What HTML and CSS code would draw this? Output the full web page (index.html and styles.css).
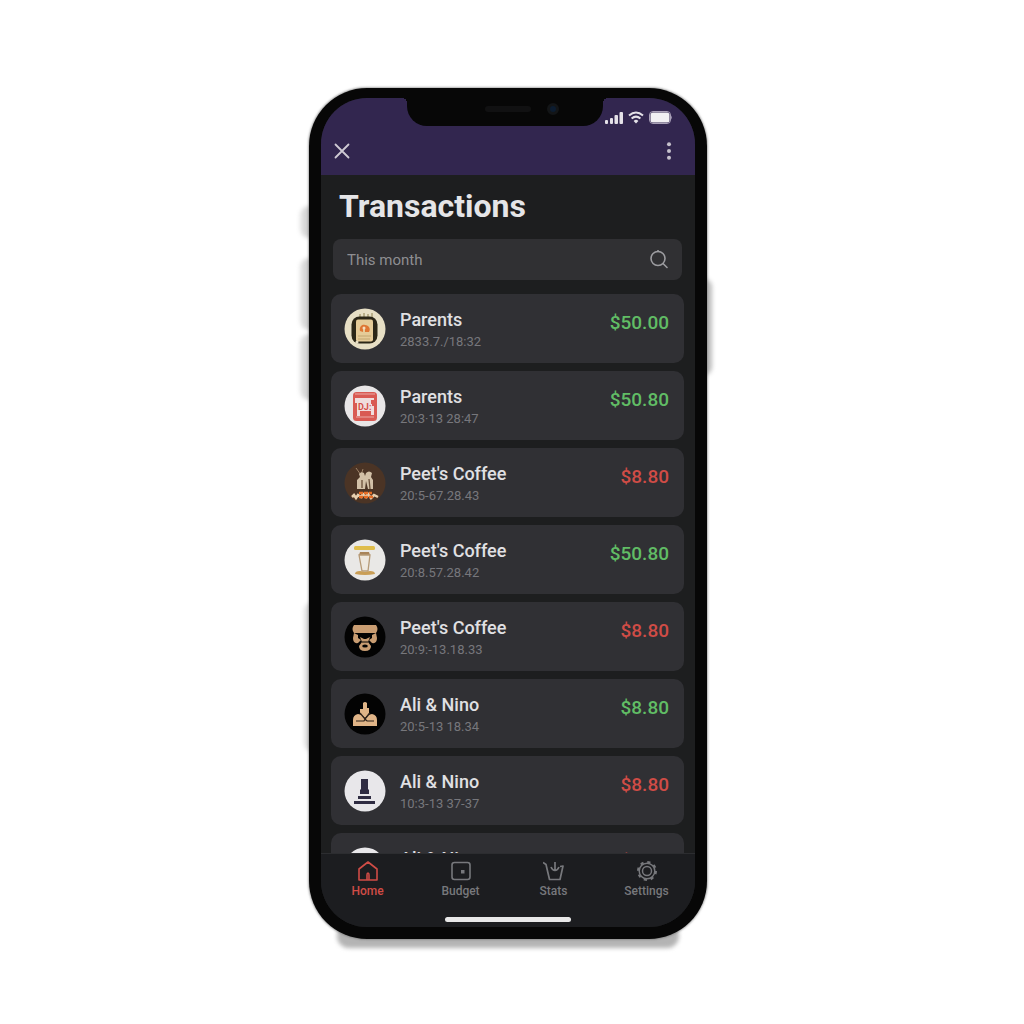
FILE: index.html
```html
<!DOCTYPE html>
<html lang="en">
<head>
<meta charset="utf-8">
<meta name="viewport" content="width=device-width, initial-scale=1">
<title>Transactions</title>
<link rel="stylesheet" href="styles.css">
</head>
<body>
<div class="phone">
  <span class="side-button mute"></span>
  <span class="side-button volume-up"></span>
  <span class="side-button volume-down"></span>
  <span class="side-button grip"></span>
  <span class="side-button power"></span>
  <span class="base-shadow"></span>
  <div class="frame">
    <div class="screen">
      <header class="header">
        <div class="status">
          <svg width="18" height="13" viewBox="0 0 18 13" fill="#e4e1e8"><rect x="0" y="9" width="3" height="4" rx="1"/><rect x="5" y="7" width="3" height="6" rx="1"/><rect x="9.500" y="4" width="3.500" height="9" rx="1"/><rect x="14.500" y="1" width="3.500" height="12" rx="1"/></svg>
          <svg width="16" height="13" viewBox="0 0 16 13" fill="none" stroke="#e4e1e8" stroke-width="2"><path d="M1 4.6Q8-1.6 15 4.6M3.6 7.5Q8 3.7 12.400 7.500"/><path d="M5.600 10Q8 7.600 10.400 10L8 12.400Z" fill="#e4e1e8" stroke="none"/></svg>
          <svg width="23" height="13" viewBox="0 0 23 13"><rect x=".5" y=".5" width="21" height="12" rx="3.500" fill="none" stroke="#a9a0b8"/><rect x="1.500" y="1.500" width="19" height="10" rx="2.500" fill="#f1f0f3"/><path d="M22 4.500Q23.500 6.500 22 8.500Z" fill="#a9a0b8"/></svg>
        </div>
        <div class="toolbar">
          <button class="icon-button" type="button" aria-label="Close"><svg width="16" height="16" viewBox="0 0 16 16" stroke="#cfcad4" stroke-width="1.800" stroke-linecap="round"><path d="M1.500 1.500l13 13M14.500 1.500l-13 13"/></svg></button>
          <button class="icon-button" type="button" aria-label="More options"><svg width="6" height="18" viewBox="0 0 6 18" fill="#c6c1cc"><circle cx="3" cy="2.300" r="2"/><circle cx="3" cy="9" r="2"/><circle cx="3" cy="15.700" r="2"/></svg></button>
        </div>
      </header>
      <div class="notch"><span class="speaker"></span><span class="camera"></span></div>

      <main class="content">
        <h1 class="title">Transactions</h1>
        <div class="search">
          <input class="search-input" type="text" placeholder="This month" aria-label="Search transactions">
          <svg width="18" height="19" viewBox="0 0 18 19" fill="none" stroke="#9c9ca0" stroke-width="1.600" stroke-linecap="round"><circle cx="8" cy="8.500" r="7"/><path d="M13 13.500l4 4M8 1.500v-1"/></svg>
        </div>
        <ul class="list">
          <li class="card">
            <svg class="avatar" viewBox="0 0 42 42"><circle cx="21" cy="21" r="20.500" fill="#e7dfc5"/><path d="M16 6v3M20 5v4M24 6v3M28 5v4" stroke="#8c804f"/><rect x="7.500" y="8.500" width="26" height="27" rx="8" fill="#2b2617"/><rect x="12" y="11.500" width="17" height="22" rx="2" fill="#e5cb98"/><path d="M14 28h13M14 31h12" stroke="#c1a670"/><path d="M16 23c-1-4 2-7 5-6 4 0 6 4 4 7h-4v-3h-2v3z" fill="#de7634"/><circle cx="20" cy="20" r="1.500" fill="#f5dec0"/><circle cx="13" cy="34" r="1.500" fill="#e7dfc5"/></svg>
            <div class="details"><span class="name">Parents</span><span class="date">2833.7./18:32</span></div>
            <span class="amount income">$50.00</span>
          </li>
          <li class="card">
            <svg class="avatar" viewBox="0 0 42 42"><circle cx="21" cy="21" r="20.500" fill="#e8e6e7"/><rect x="9" y="7" width="24" height="29" rx="3.500" fill="#d95a53"/><path d="M11 9h20M12 32h18" stroke="#eaaaa6"/><path d="M11 13h19v4h-2v4h2v9h-3v-4H16v5h-3V18h-2z" fill="#f0dddd"/><text x="14" y="25" class="mark">DJ:</text><path d="M27 15h4v4h-4z" fill="#d95a53"/></svg>
            <div class="details"><span class="name">Parents</span><span class="date">20:3·13 28:47</span></div>
            <span class="amount income">$50.80</span>
          </li>
          <li class="card">
            <svg class="avatar" viewBox="0 0 42 42"><circle cx="21" cy="21" r="20.500" fill="#4b3425"/><path d="M12 6l5 7M19 7l-2 6" stroke="#9d8268"/><path d="M15 12q2-3 5-1l1 3 1-3q3-3 6 0l-1 4 2 3v9h-5l-2-8-1 8h-8v-9l3-3z" fill="#d2c0a7"/><path d="M18 18v8M25 17l1 10" stroke="#6a503a" stroke-width="1.300"/><path d="M8 35l2-2 2 3 2-3 3 2 2-3 3 3 2-3 3 4 3-3 4 2" fill="none" stroke="#e6cfae" stroke-width="2.500"/><path d="M15 31h13M15 35h15" stroke="#e66d25" stroke-width="2.500" stroke-dasharray="4 1"/></svg>
            <div class="details"><span class="name">Peet's Coffee</span><span class="date">20:5-67.28.43</span></div>
            <span class="amount expense">$8.80</span>
          </li>
          <li class="card">
            <svg class="avatar" viewBox="0 0 42 42"><circle cx="21" cy="21" r="20.500" fill="#e9e8e6"/><rect x="10" y="7" width="21" height="4" rx="1.500" fill="#dfbd4b"/><path d="M16 13h9l1 3H15z" fill="#a98459"/><path d="M15 16l3 16h6l2-16z" fill="#eee8df" stroke="#b69a77" stroke-width="1.300"/><path d="M11 35q0-3 5-3l5 1 5-1q5 0 5 3-10 2-20 0z" fill="#c99e56"/></svg>
            <div class="details"><span class="name">Peet's Coffee</span><span class="date">20:8.57.28.42</span></div>
            <span class="amount income">$50.80</span>
          </li>
          <li class="card">
            <svg class="avatar" viewBox="0 0 42 42"><circle cx="21" cy="21" r="20.500" fill="#030303"/><path d="M10 9h22q3 4 0 8H10q-3-4 0-8zM10 17l4 2v3l3 2-3 3q-5 1-5-5zM32 17l-4 2v3l-3 2 3 3q5 1 5-5z" fill="#c99d72"/><path d="M16 21l4 2h2l4-2-2 5 3 4q0 5-6 5t-6-5l3-4z" fill="#c99d72"/><ellipse cx="21" cy="30" rx="2.800" ry="1.500" fill="#030303"/><path d="M18 26h6" stroke="#030303"/></svg>
            <div class="details"><span class="name">Peet's Coffee</span><span class="date">20:9:-13.18.33</span></div>
            <span class="amount expense">$8.80</span>
          </li>
          <li class="card">
            <svg class="avatar" viewBox="0 0 42 42"><circle cx="21" cy="21" r="20.500" fill="#030303"/><path d="M19 10q2-2 4 0v5h2v5l-4 5-5-5v-4h3z" fill="#dfb487"/><path d="M9 33v-6q0-5 5-6l4 1 3 4 3-4 4-1q5 1 5 6v6z" fill="#dfb487"/><path d="M12 28h8l1-2 2 2h7M16 20l5 6 5-6" fill="none" stroke="#2d2119" stroke-width="1.200"/></svg>
            <div class="details"><span class="name">Ali &amp; Nino</span><span class="date">20:5-13 18.34</span></div>
            <span class="amount income">$8.80</span>
          </li>
          <li class="card">
            <svg class="avatar" viewBox="0 0 42 42"><circle cx="21" cy="21" r="20.500" fill="#e8e7ea"/><path d="M17 9h7v10l1 1v4h-9v-4l1-1zM14 26h13v3H14zM10 31h21v3H10z" fill="#2f2c42"/></svg>
            <div class="details"><span class="name">Ali &amp; Nino</span><span class="date">10:3-13 37-37</span></div>
            <span class="amount expense">$8.80</span>
          </li>
          <li class="card">
            <svg class="avatar" viewBox="0 0 42 42"><circle cx="21" cy="21" r="20.500" fill="#e8e7ea"/></svg>
            <div class="details"><span class="name">Ali &amp; Nino</span></div>
            <span class="amount expense">$8.80</span>
          </li>
        </ul>
      </main>

      <footer class="footer">
        <nav class="tabs">
          <a class="tab active" href="#home"><svg width="22" height="20" viewBox="0 0 22 20" fill="none" stroke="currentColor" stroke-width="1.600" stroke-linejoin="round"><path d="M2 19V8l9-7 9 7v11zM10 19v-5q0-2 1-2t1 2v5"/></svg>Home</a>
          <a class="tab" href="#budget"><svg width="22" height="20" viewBox="0 0 22 20" fill="none" stroke="currentColor" stroke-width="1.600"><rect x="2" y="1.500" width="18" height="17" rx="2.500"/><rect x="11" y="9" width="3.500" height="3.500" fill="currentColor" stroke="none"/></svg>Budget</a>
          <a class="tab" href="#stats"><svg width="22" height="20" viewBox="0 0 22 20" fill="none" stroke="currentColor" stroke-width="1.700" stroke-linejoin="round"><path d="M0 1.500l3 2 3.500 15H17l3-13.500-3 .5M12 1v8M8 6q1.500 3.500 4 3.500T16 6"/></svg>Stats</a>
          <a class="tab" href="#settings"><svg width="22" height="20" viewBox="0 0 22 20" fill="none" stroke="currentColor" stroke-width="1.500"><circle cx="11" cy="10" r="4.500"/><circle cx="11" cy="10" r="7.800"/><circle cx="11" cy="10" r="9" stroke-width="2" stroke-dasharray="3.200 3.870"/></svg>Settings</a>
        </nav>
        <div class="home-indicator"></div>
      </footer>
    </div>
  </div>
</div>
</body>
</html>
```
FILE: styles.css
```css
* { box-sizing: border-box; }

body {
  margin: 0;
  min-height: 100vh;
  padding: 88px 8px 84px 0;
  background: #fff;
  font-family: Roboto, "Liberation Sans", sans-serif;
  display: flex;
  justify-content: center;
  align-items: flex-start;
}

.phone {
  position: relative;
  width: 100%;
  max-width: 398px;
}

.frame {
  position: relative;
  display: flex;
  aspect-ratio: 398 / 851;
  padding: 10px 12px 12px;
  border-radius: 58px;
  background: #070707;
  box-shadow: 0 0 2px 1px #77777799;
}

.screen {
  position: relative;
  flex: 1;
  min-width: 0;
  display: flex;
  flex-direction: column;
  overflow: hidden;
  border-radius: 46px;
  background: #1d1e1f;
}

/* Hardware edges that stick out around the frame */
.side-button {
  position: absolute;
  left: -9px;
  width: 18px;
  border-radius: 9px;
  background: linear-gradient(90deg, #e4e4e4, #b8b8b8);
  filter: blur(2px);
}
.mute { top: 118px; height: 32px; }
.volume-up { top: 170px; height: 72px; }
.volume-down { top: 246px; height: 66px; }
.grip { top: 514px; left: -5px; height: 150px; }
.power { top: 190px; left: auto; right: -5px; height: 98px; }

.base-shadow {
  position: absolute;
  left: 28px;
  right: 28px;
  bottom: -9px;
  height: 24px;
  border-radius: 12px;
  background: #b4b4b4;
  filter: blur(2px);
}

.header { background: #32264f; }

.status {
  display: flex;
  justify-content: flex-end;
  align-items: center;
  gap: 5px;
  height: 28px;
  padding: 10px 23px 0 0;
}

.toolbar {
  display: flex;
  justify-content: space-between;
  align-items: center;
  height: 49px;
  padding: 1px 13px 0;
}

.icon-button {
  display: flex;
  justify-content: center;
  min-width: 16px;
  padding: 0;
  border: 0;
  background: none;
}
.icon-button:last-child { min-width: 26px; }

.notch {
  position: absolute;
  top: 0;
  left: 86px;
  right: 92px;
  height: 28px;
  border-radius: 0 0 20px 20px;
  background: #070707;
}
.notch::before,
.notch::after {
  content: "";
  position: absolute;
  top: 0;
  width: 5px;
  height: 5px;
}
.notch::before {
  left: -5px;
  background: radial-gradient(circle at 0 100%, transparent 5px, #070707 5px);
}
.notch::after {
  right: -5px;
  background: radial-gradient(circle at 100% 100%, transparent 5px, #070707 5px);
}
.speaker {
  position: absolute;
  top: 8px;
  left: 78px;
  width: 46px;
  height: 6px;
  border-radius: 3px;
  background: #111112;
}
.camera {
  position: absolute;
  top: 5px;
  left: 140px;
  width: 12px;
  height: 12px;
  border: 3px solid #131517;
  border-radius: 50%;
  background: #0c1c30;
}

.content {
  flex: 1;
  min-height: 0;
  display: flex;
  flex-direction: column;
  overflow: hidden;
  padding: 11px 11px 0 10px;
}

.title {
  margin: 0 8px 13px;
  font-size: 32px;
  line-height: 40px;
  font-weight: 700;
  color: #e5e5e7;
}

.search {
  flex: none;
  display: flex;
  align-items: center;
  height: 41px;
  margin: 0 2px 14px;
  padding: 0 14px;
  border-radius: 8px;
  background: #303033;
}
.search-input {
  flex: 1;
  min-width: 0;
  padding: 0;
  border: 0;
  outline: 0;
  background: none;
  font: 400 15px/20px Roboto, "Liberation Sans", sans-serif;
  color: #e5e5e7;
}
.search-input::placeholder { color: #8e8e92; opacity: 1; }

.list {
  display: flex;
  flex-direction: column;
  gap: 8px;
  margin: 0;
  padding: 0;
  list-style: none;
}

.card {
  flex: none;
  display: flex;
  align-items: flex-start;
  gap: 14px;
  height: 69px;
  padding: 14px 15px 0 13px;
  border-radius: 10px;
  background: #303034;
}

.avatar { flex: none; width: 42px; height: 42px; }

.mark { font: 700 9px Roboto, sans-serif; fill: #d34f49; }

.details { flex: 1; min-width: 0; }

.name,
.date { display: block; white-space: nowrap; }
.name { font-size: 18px; line-height: 24px; font-weight: 500; color: #e0e0e3; }
.date { font-size: 13px; line-height: 20px; color: #77777c; }

.amount { font-size: 19px; line-height: 30px; font-weight: 500; }
.income { color: #61bd65; }
.expense { color: #d04c46; }

.footer {
  border-top: 1px solid #2c2d30;
  background: #1c1d20;
}

.tabs { display: flex; padding: 7px 2px 0 0; }
.tab {
  flex: 1;
  display: flex;
  flex-direction: column;
  align-items: center;
  gap: 2px;
  font-size: 12px;
  line-height: 16px;
  font-weight: 500;
  color: #77787c;
  text-decoration: none;
}
.active { color: #d04c46; }

.home-indicator {
  width: 126px;
  height: 5px;
  margin: 18px auto 5px;
  border-radius: 3px;
  background: #e8e8e8;
}
```
